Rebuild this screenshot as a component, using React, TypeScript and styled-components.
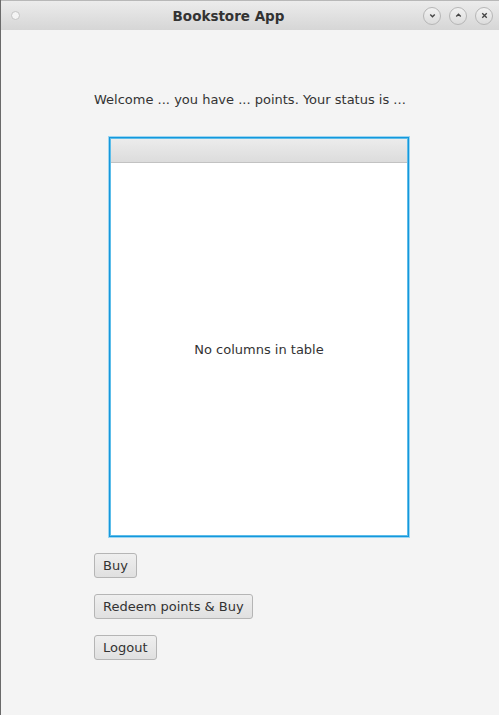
import React from 'react';
import styled, {createGlobalStyle} from 'styled-components';

const Global = createGlobalStyle`
  html, body {
    margin: 0;
    padding: 0;
    background: #f4f4f4;
  }
  body {
    font-family: 'DejaVu Sans', 'Liberation Sans', sans-serif;
  }
`;

const Window = styled.div`
  width: 499px;
  height: 715px;
  display: flex;
  flex-direction: column;
  background: #f4f4f4;
  border-left: 1px solid #6a6a6a;
  box-sizing: border-box;
`;

const TitleBar = styled.header`
  height: 30px;
  flex: none;
  display: flex;
  align-items: center;
  justify-content: space-between;
  padding: 0 6px 0 10px;
  background: linear-gradient(#ececec, #d6d6d6);
  border-top: 1px solid #b8b8b8;
  box-sizing: border-box;
  .dot {
    width: 7px;
    height: 7px;
    border-radius: 50%;
    background: #f4f4f4;
    border: 1px solid #c4c4c4;
  }
  .title {
    font-weight: 700;
    font-size: 13.5px;
    color: #333;
    margin-left: 14px;
  }
  .controls {
    display: flex;
    gap: 8px;
  }
`;

const CtrlButton = styled.span`
  width: 16px;
  height: 16px;
  border-radius: 50%;
  border: 1px solid #b6b6b6;
  background: linear-gradient(#f2f2f2, #dcdcdc);
  display: flex;
  align-items: center;
  justify-content: center;
  svg {
    width: 9px;
    height: 9px;
    stroke: #444;
    fill: none;
    stroke-width: 1.5;
  }
`;

const Content = styled.main`
  flex: 1;
  padding: 62px 0 0 93px;
  display: flex;
  flex-direction: column;
  align-items: flex-start;
  color: #333;
  font-size: 13px;
`;

const Welcome = styled.p`
  margin: 0;
  line-height: 16px;
`;

const Table = styled.div`
  margin: 29px 0 0 15px;
  width: 300px;
  height: 400px;
  box-sizing: border-box;
  border: 1px solid #1597dc;
  box-shadow: 0 0 0 1px #9ad6f2, inset 0 0 0 1px #5dbde9;
  background: #fff;
  display: flex;
  flex-direction: column;
  .head {
    height: 23px;
    flex: none;
    margin: 1px 1px 0;
    background: linear-gradient(#ececec, #dcdcdc);
    border-bottom: 1px solid #c2c2c2;
  }
  .empty {
    flex: 1;
    display: flex;
    align-items: center;
    justify-content: center;
    padding-bottom: 1px;
  }
`;

const Buttons = styled.div`
  margin-top: 16px;
  display: flex;
  flex-direction: column;
  align-items: flex-start;
  gap: 16px;
`;

const Button = styled.button`
  height: 25px;
  padding: 0 8px;
  font-family: 'DejaVu Sans', 'Liberation Sans', sans-serif;
  font-size: 13px;
  color: #333;
  border: 1px solid #b5b5b5;
  border-radius: 3px;
  background: linear-gradient(#efefef, #e0e0e0);
`;

export default function App() {
  return (
    <Window>
      <Global />
      <TitleBar>
        <span className="dot" />
        <span className="title">Bookstore App</span>
        <div className="controls">
          <CtrlButton>
            <svg viewBox="0 0 10 10"><path d="M2.5 4 L5 6.5 L7.5 4" /></svg>
          </CtrlButton>
          <CtrlButton>
            <svg viewBox="0 0 10 10"><path d="M2.5 6 L5 3.5 L7.5 6" /></svg>
          </CtrlButton>
          <CtrlButton>
            <svg viewBox="0 0 10 10"><path d="M2.5 2.5 L7.5 7.5 M7.5 2.5 L2.5 7.5" /></svg>
          </CtrlButton>
        </div>
      </TitleBar>
      <Content>
        <Welcome>Welcome ... you have ... points. Your status is ...</Welcome>
        <Table>
          <div className="head" />
          <div className="empty">No columns in table</div>
        </Table>
        <Buttons>
          <Button>Buy</Button>
          <Button>Redeem points &amp; Buy</Button>
          <Button>Logout</Button>
        </Buttons>
      </Content>
    </Window>
  );
}
